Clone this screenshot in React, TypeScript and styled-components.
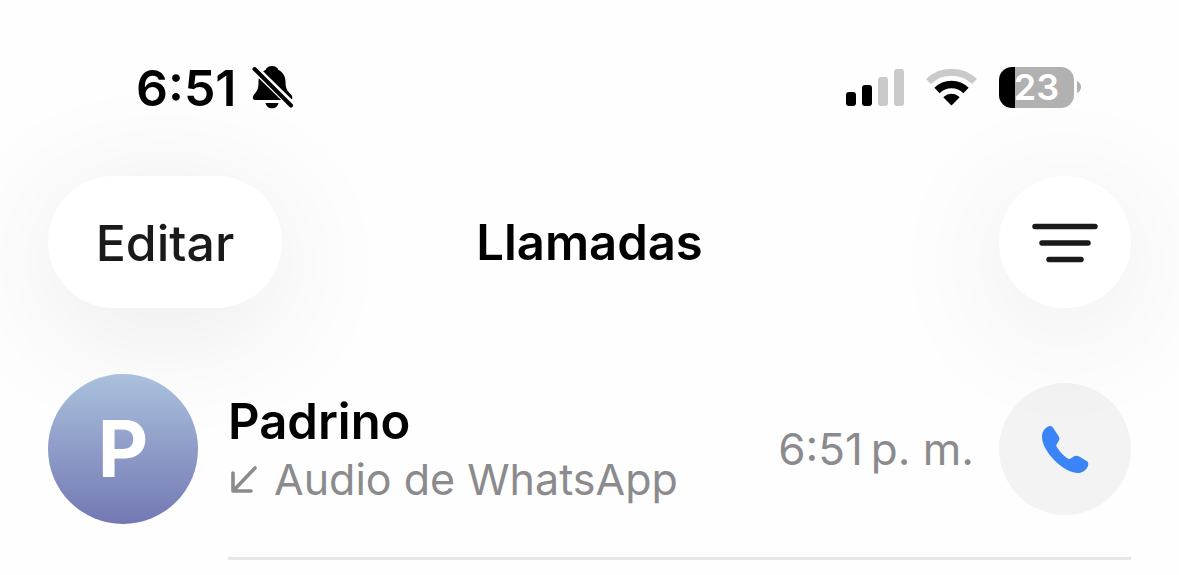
import React from "react";
import styled, { createGlobalStyle } from "styled-components";

const GlobalStyle = createGlobalStyle`
  * { box-sizing: border-box; }
  body {
    margin: 0;
    background: #fefefe;
    color: #000;
    font-family: Inter, "Liberation Sans", sans-serif;
    overflow-x: hidden;
  }
  h1, h2, p { margin: 0; }
  svg { display: block; }
  button { border: 0; font: inherit; cursor: pointer; }
`;

const Screen = styled.main`
  display: flex;
  flex-direction: column;
`;

const StatusBar = styled.div`
  display: flex;
  align-items: center;
  justify-content: space-between;
  padding: 56px 98px 0 136px;
`;

const StatusGroup = styled.div<{ $gap: number }>`
  display: flex;
  align-items: center;
  gap: ${(p) => p.$gap}px;
`;

const Clock = styled.span`
  padding-top: 2px;
  font-size: 50px;
  line-height: 60px;
  font-weight: 600;
`;

const Battery = styled.div`
  display: flex;
  align-items: center;
  gap: 3px;
`;

const BatteryBody = styled.div<{ $level: number }>`
  width: 75px;
  height: 41px;
  border-radius: 13px;
  display: flex;
  align-items: center;
  justify-content: center;
  color: #fff;
  font-size: 36px;
  line-height: 40px;
  font-weight: 600;
  background: linear-gradient(
    90deg,
    #000 ${(p) => p.$level}%,
    #b1b1b1 ${(p) => p.$level}%
  );
`;

const Header = styled.header`
  display: grid;
  grid-template-columns: 1fr auto 1fr;
  align-items: center;
  padding: 58px 48px 0;
`;

const Title = styled.h1`
  padding-top: 2px;
  font-size: 49px;
  line-height: 60px;
  font-weight: 600;
`;

const GlassButton = styled.button<{ $round?: boolean }>`
  width: ${(p) => (p.$round ? 132 : 234)}px;
  height: 132px;
  justify-self: ${(p) => (p.$round ? "end" : "start")};
  display: flex;
  align-items: center;
  justify-content: center;
  padding: 2px 0 0;
  border-radius: 66px;
  background: #fff;
  color: #1a1a1a;
  font-size: 50px;
  line-height: 60px;
  font-weight: 500;
  box-shadow: 0 20px 130px rgba(0, 0, 0, 0.09);
`;

const CallList = styled.ul`
  list-style: none;
  margin: 0;
  padding: 66px 48px 0;
`;

const CallRow = styled.li`
  position: relative;
  display: flex;
  align-items: stretch;
  gap: 30px;
`;

const Avatar = styled.div`
  flex: none;
  width: 150px;
  height: 150px;
  border-radius: 50%;
  display: flex;
  align-items: center;
  justify-content: center;
  background: linear-gradient(#aac1dd, #7378b3);
  color: #fff;
  font-size: 78px;
  line-height: 96px;
  font-weight: 700;
`;

const RowBody = styled.div`
  flex: 1;
  min-width: 0;
  min-height: 186px;
  display: flex;
  align-items: center;
  padding-bottom: 33px;
  border-bottom: 3px solid #e6e6e6;
`;

const Caller = styled.div`
  flex: 1;
  min-width: 0;
`;

const Name = styled.h2`
  font-size: 49px;
  line-height: 60px;
  font-weight: 600;
`;

const Detail = styled.p`
  display: flex;
  align-items: center;
  gap: 17px;
  padding-left: 3px;
  color: #8b8b8d;
  font-size: 43px;
  line-height: 54px;
`;

const Time = styled.time`
  color: #8b8b8d;
  font-size: 44px;
  line-height: 54px;
  white-space: nowrap;
`;

const CallButton = styled.button`
  width: 132px;
  height: 132px;
  margin-left: 25px;
  padding: 0;
  border-radius: 50%;
  display: flex;
  align-items: center;
  justify-content: center;
  background: rgba(0, 0, 0, 0.043);
`;

const MutedBell = () => (
  <svg width="44" height="44" viewBox="0 0 44 44" role="img" aria-label="Silencio">
    <path d="M20 1C16.500 1 14.200 2.800 13.600 5C9 7 6.500 11.500 6.500 17C6.500 25 4.500 26.500 2 29.500C0 32.300 .5 35 3 35H38C40.500 35 41.200 32.300 39 29.500C36.500 26.500 33.500 25 33.500 17C33.500 11.500 31 7 26.400 5C25.800 2.800 23.500 1 20 1Z" />
    <path d="M13.500 38H26.500C26 41 23.500 43.300 20 43.300C16.500 43.300 14 41 13.500 38Z" />
    <path d="M0 1L43 43" stroke="#fefefe" strokeWidth="8" />
    <path d="M2.500 4L39 40.500" stroke="#000" strokeWidth="4" strokeLinecap="round" />
  </svg>
);

const Signal = () => (
  <svg width="58" height="37" viewBox="0 0 58 37" role="img" aria-label="Señal">
    <rect x="0" y="23" width="10" height="14" rx="3" />
    <rect x="16" y="16" width="10" height="21" rx="3" />
    <rect x="32" y="8" width="10" height="29" rx="3" fill="#cacaca" />
    <rect x="48" y="0" width="10" height="37" rx="3" fill="#cacaca" />
  </svg>
);

const Wifi = () => (
  <svg width="51" height="38" viewBox="0 0 51 38" fill="none" role="img" aria-label="Wi-Fi">
    <path d="M2.500 13.500A33 33 0 0 1 48.500 13.500" stroke="#cacaca" strokeWidth="7" />
    <path d="M11 22.500A20.500 20.500 0 0 1 40 22.500" stroke="#000" strokeWidth="7.500" />
    <path d="M18.300 29.300A10.500 10.500 0 0 1 32.700 29.300L25.500 36.500Z" fill="#000" stroke="#000" strokeWidth="1.500" strokeLinejoin="round" />
  </svg>
);

const BatteryTip = () => (
  <svg width="4" height="12" viewBox="0 0 4 12" aria-hidden="true">
    <path d="M0 0C2.500 1 4 3 4 6S2.500 11 0 12Z" fill="#b1b1b1" />
  </svg>
);

const FilterIcon = () => (
  <svg width="66" height="40" viewBox="0 0 66 40" aria-hidden="true">
    <path d="M3 3.500H63M10 20H56M17 36.500H49" stroke="#1a1a1a" strokeWidth="5.500" strokeLinecap="round" />
  </svg>
);

const IncomingArrow = () => (
  <svg width="26" height="28" viewBox="0 0 26 28" fill="none" aria-hidden="true">
    <path d="M24 3L2.500 25.500M2 8V26H20" stroke="#8b8b8d" strokeWidth="3.600" strokeLinecap="round" strokeLinejoin="round" />
  </svg>
);

const PhoneIcon = () => (
  <svg width="80" height="80" viewBox="0 0 240 240" aria-hidden="true">
    <path
      fill="#3b84f7"
      d="M72 52C78 50 82 53 84 56L101 82C105 89 103 94 98 101L95 106C93 110 94 112 97 116C105 129 117 141 129 149C133 151 135 150 138 148L145 143C152 139 158 140 164 143L186 157C190 160 191 165 189 170C186 179 176 192 158 192C130 192 98 166 80 145C60 121 51 100 51 83C51 68 60 56 72 52Z"
    />
  </svg>
);

export default function App() {
  return (
    <Screen>
      <GlobalStyle />
      <StatusBar>
        <StatusGroup $gap={15}>
          <Clock>6:51</Clock>
          <MutedBell />
        </StatusGroup>
        <StatusGroup $gap={22}>
          <Signal />
          <Wifi />
          <Battery>
            <BatteryBody $level={22}>23</BatteryBody>
            <BatteryTip />
          </Battery>
        </StatusGroup>
      </StatusBar>
      <Header>
        <GlassButton type="button">Editar</GlassButton>
        <Title>Llamadas</Title>
        <GlassButton type="button" $round aria-label="Filtrar">
          <FilterIcon />
        </GlassButton>
      </Header>
      <CallList>
        <CallRow>
          <Avatar>P</Avatar>
          <RowBody>
            <Caller>
              <Name>Padrino</Name>
              <Detail>
                <IncomingArrow />
                Audio de WhatsApp
              </Detail>
            </Caller>
            <Time>6:51{"\u2009"}p. m.</Time>
            <CallButton type="button" aria-label="Llamar a Padrino">
              <PhoneIcon />
            </CallButton>
          </RowBody>
        </CallRow>
      </CallList>
    </Screen>
  );
}
